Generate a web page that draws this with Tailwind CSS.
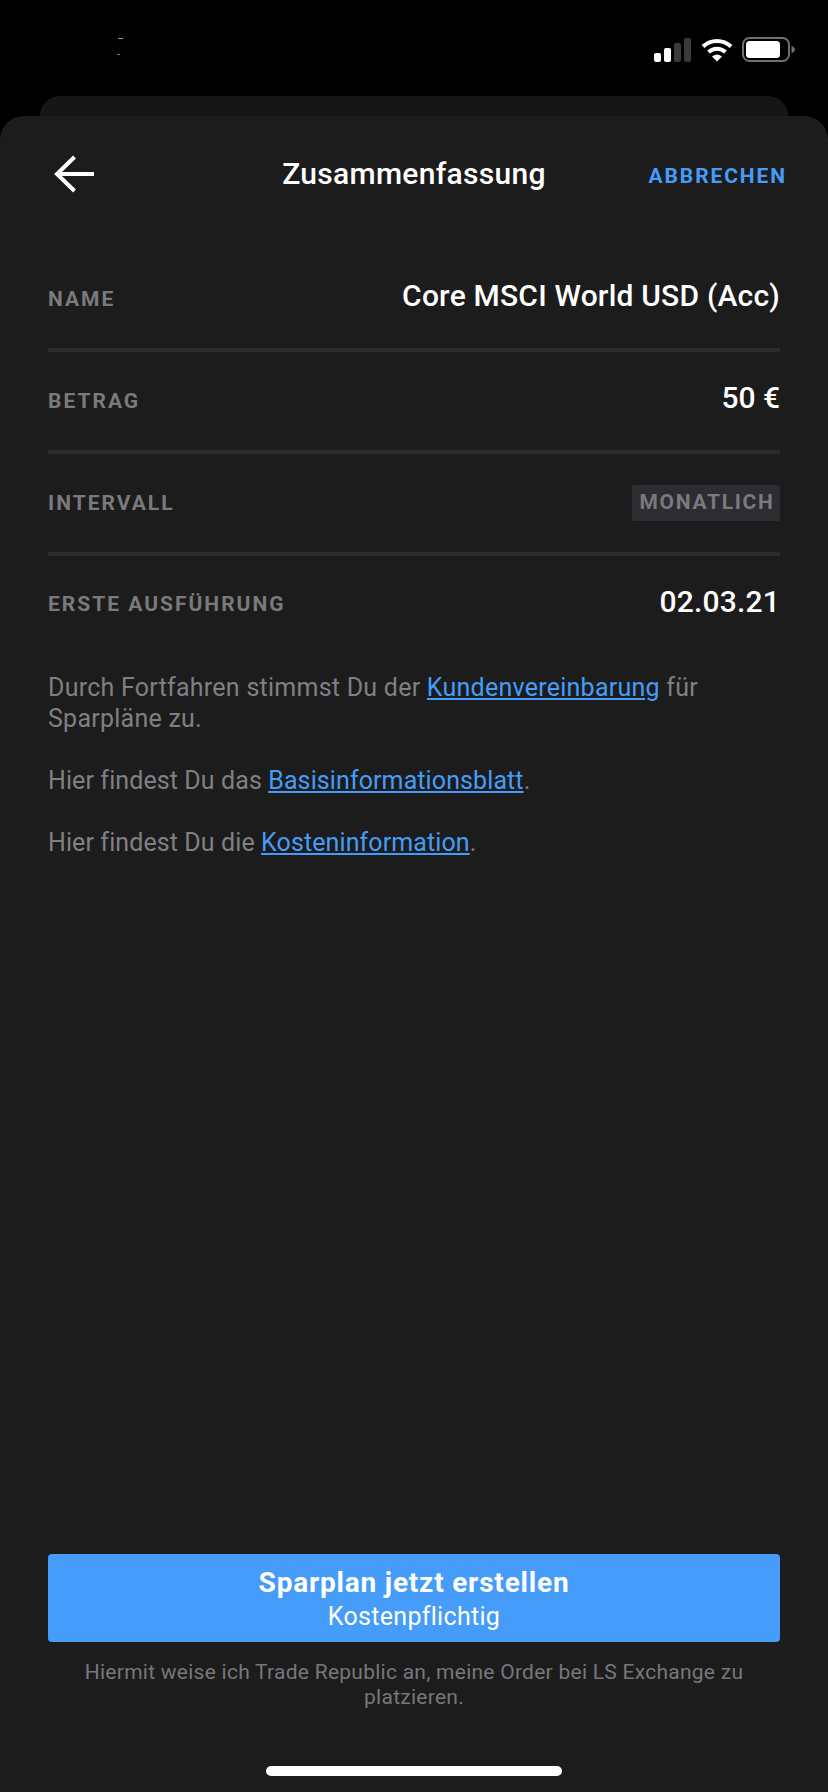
<!DOCTYPE html>
<html lang="de">
<head>
  <meta charset="UTF-8">
  <title>Zusammenfassung</title>
  <script src="https://cdn.jsdelivr.net/npm/@tailwindcss/browser@4"></script>
</head>
<body class="bg-black font-['Roboto',sans-serif] text-white">
  <div class="w-[828px] h-[1792px] overflow-hidden flex flex-col">

    <!-- status bar -->
    <div class="h-[96px] shrink-0 relative flex justify-end items-start pt-[37px] pr-[33px]">
      <span class="absolute left-[118px] top-[38px] w-[5px] h-px bg-[#999]"></span>
      <span class="absolute left-[117px] top-[54px] w-[3px] h-px bg-[#777]"></span>
      <svg width="37" height="24" viewBox="0 0 37 24" class="mt-[1px]">
        <rect x="0" y="15" width="7" height="9" rx="2" fill="#fff"/>
        <rect x="10" y="10" width="7" height="14" rx="2" fill="#fff"/>
        <rect x="20" y="5" width="7" height="19" rx="2" fill="#3a3a3a"/>
        <rect x="30" y="0" width="7" height="24" rx="2" fill="#3a3a3a"/>
      </svg>
      <svg width="32" height="25" viewBox="0 0 32 25" class="ml-[10px]" fill="none" stroke="#fff" stroke-width="4">
        <path d="M2 9.500C10 2 22 2 30 9.500"/>
        <path d="M7.500 15C12.500 10.500 19.500 10.500 24.500 15"/>
        <path d="M16 24.500L11 19.500C14 17 18 17 21 19.500Z" fill="#fff" stroke="none"/>
      </svg>
      <svg width="53" height="25" viewBox="0 0 53 25" class="ml-[9px]">
        <rect x="1" y="1" width="46" height="23" rx="6.500" fill="none" stroke="#707070" stroke-width="2"/>
        <rect x="4" y="4" width="34" height="17" rx="3.500" fill="#fff"/>
        <path d="M49.500 9C51.500 9.500 53 11 53 12.500C53 14 51.500 15.500 49.500 16Z" fill="#707070"/>
      </svg>
    </div>

    <div class="relative flex-1 flex flex-col">
      <!-- card behind the sheet -->
      <div class="mx-[40px] h-[20px] shrink-0 rounded-t-[20px] bg-[#161616]"></div>

      <div class="flex-1 flex flex-col rounded-t-[24px] bg-[#1c1c1c]">
        <div class="h-[114px] shrink-0 grid grid-cols-[1fr_auto_1fr] items-center px-[41px]">
          <svg width="40" height="40" viewBox="0 0 40 40" fill="none" stroke="#fff" stroke-width="4" class="ml-[13px] mt-[1px]">
            <path d="M40 20H4"/>
            <path d="M20.500 3L3 20L20.500 37"/>
          </svg>
          <h1 class="mt-[2px] text-[30px] font-medium leading-none tracking-[0.3px]">Zusammenfassung</h1>
          <a class="mt-[6px] justify-self-end text-[21px] font-bold leading-none tracking-[1.9px] text-[#459cf9]">ABBRECHEN</a>
        </div>

        <div class="mx-[48px] mt-[20px]">
          <div class="h-[102px] flex justify-between items-center border-b-4 border-[#2b2b2f]">
            <span class="mt-[2px] text-[21px] font-bold tracking-[2px] text-[#7a7a7e]">NAME</span>
            <span class="text-[30px] font-medium tracking-[0.2px] -mt-[8px]">Core MSCI World USD (Acc)</span>
          </div>
          <div class="h-[102px] flex justify-between items-center border-b-4 border-[#2b2b2f]">
            <span class="mt-[2px] text-[21px] font-bold tracking-[2px] text-[#7a7a7e]">BETRAG</span>
            <span class="text-[30px] font-medium -mt-[8px]">50 €</span>
          </div>
          <div class="h-[102px] flex justify-between items-center border-b-4 border-[#2b2b2f]">
            <span class="mt-[2px] text-[21px] font-bold tracking-[2px] text-[#7a7a7e]">INTERVALL</span>
            <span class="h-[36px] w-[148px] flex items-center justify-center pl-[2px] rounded-[2px] bg-[#2c2c31] text-[21px] font-bold tracking-[1.7px] text-[#7a7a7e]">MONATLICH</span>
          </div>
          <div class="h-[96px] mb-[20px] flex justify-between items-center">
            <span class="mt-[2px] text-[21px] font-bold tracking-[2px] text-[#7a7a7e]">ERSTE AUSFÜHRUNG</span>
            <span class="text-[30px] font-medium tracking-[0.2px] -mt-[6px]">02.03.21</span>
          </div>
        </div>

        <div class="mx-[48px] flex flex-col gap-[31px] text-[25px] leading-[31px] text-[#808084]">
          <p class="tracking-[0.25px]">Durch Fortfahren stimmst Du der <a class="text-[#459cf9] underline">Kundenvereinbarung</a> für Sparpläne zu.</p>
          <p class="tracking-[0.1px]">Hier findest Du das <a class="text-[#459cf9] underline">Basisinformationsblatt</a>.</p>
          <p class="tracking-[0.1px]">Hier findest Du die <a class="text-[#459cf9] underline">Kosteninformation</a>.</p>
        </div>

        <div class="mt-auto mx-[48px] flex flex-col items-center">
          <button class="w-full h-[88px] flex flex-col items-center justify-center rounded-[4px] bg-[#459cf9]">
            <span class="mt-[1px] text-[28px] font-bold leading-[36px] tracking-[0.8px]">Sparplan jetzt erstellen</span>
            <span class="text-[25px] leading-[32px] tracking-[0.3px]">Kostenpflichtig</span>
          </button>
          <p class="mt-[18px] w-[690px] text-center text-[21px] leading-[25px] tracking-[0.26px] text-[#77777b]">Hiermit weise ich Trade Republic an, meine Order bei LS Exchange zu platzieren.</p>
          <div class="mt-[56px] mb-[16px] h-[10px] w-[296px] rounded-full bg-white"></div>
        </div>
      </div>
    </div>
  </div>
</body>
</html>
